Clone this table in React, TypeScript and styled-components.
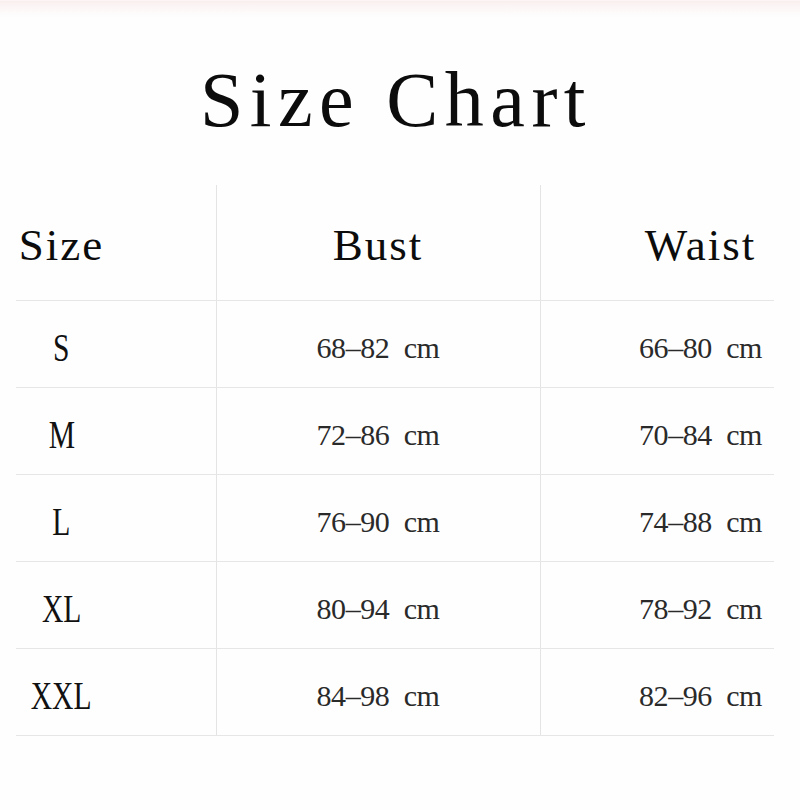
import React from "react";
import styled, { createGlobalStyle } from "styled-components";

const Global = createGlobalStyle`
  html, body { margin: 0; padding: 0; background: #fefefe; }
  body { font-family: "Liberation Serif", "Times New Roman", serif; color: #111; }
`;

const Page = styled.div`
  width: 800px;
  height: 810px;
  background: #fefefe;
  overflow: hidden;
`;

const TopBand = styled.div`
  height: 16px;
  border-top: 1px solid #fbf6f5;
  background: linear-gradient(#f9eeee 0px, #fbf3f3 3px, #fdf9f9 10px, #fefefe 16px);
`;

const Title = styled.h1`
  margin: 44px 0 0 0;
  padding-right: 8px;
  font-family: "Liberation Serif", "Times New Roman", serif;
  font-weight: normal;
  font-size: 78px;
  line-height: 78px;
  letter-spacing: 6.5px;
  text-align: center;
  color: #0c0c0c;
`;

const Table = styled.div`
  margin: 46px 0 0 16px;
  display: grid;
  grid-template-columns: 200px 324px 234px;
`;

const Cell = styled.div<{ $col: number; $head?: boolean }>`
  height: ${(p) => (p.$head ? "115px" : "86px")};
  border-bottom: 1px solid #e6e6e6;
  border-right: ${(p) => (p.$col < 2 ? "1px solid #e4e4e4" : "none")};
  box-sizing: content-box;
  display: flex;
  align-items: center;
  justify-content: center;
  padding-left: ${(p) => (p.$col === 2 ? "87px" : "0")};
  padding-right: ${(p) => (p.$col === 0 ? "109px" : "0")};
  margin-right: ${(p) => (p.$col < 2 ? "-1px" : "0")};
  & > span {
    position: relative;
    top: ${(p) => (p.$head ? "3px" : "4px")};
  }
`;

const HeadText = styled.span`
  font-size: 45px;
  line-height: 45px;
  letter-spacing: 2px;
  color: #0c0c0c;
`;

const SizeText = styled.span`
  display: inline-block;
  font-size: 40px;
  line-height: 40px;
  color: #111;
  transform: scaleX(0.74);
`;

const DataText = styled.span`
  font-size: 30px;
  line-height: 30px;
  white-space: pre;
  letter-spacing: -0.4px;
  color: #2a2a2a;
`;

const rows = [
  ["S", "68–82", "66–80"],
  ["M", "72–86", "70–84"],
  ["L", "76–90", "74–88"],
  ["XL", "80–94", "78–92"],
  ["XXL", "84–98", "82–96"],
];

export default function App() {
  return (
    <Page>
      <Global />
      <TopBand />
      <Title>Size Chart</Title>
      <Table>
        <Cell $col={0} $head>
          <HeadText>Size</HeadText>
        </Cell>
        <Cell $col={1} $head>
          <HeadText>Bust</HeadText>
        </Cell>
        <Cell $col={2} $head>
          <HeadText>Waist</HeadText>
        </Cell>
        {rows.map(([s, b, w]) => (
          <React.Fragment key={s}>
            <Cell $col={0}>
              <SizeText>{s}</SizeText>
            </Cell>
            <Cell $col={1}>
              <DataText>{b + "  cm"}</DataText>
            </Cell>
            <Cell $col={2}>
              <DataText>{w + "  cm"}</DataText>
            </Cell>
          </React.Fragment>
        ))}
      </Table>
    </Page>
  );
}
